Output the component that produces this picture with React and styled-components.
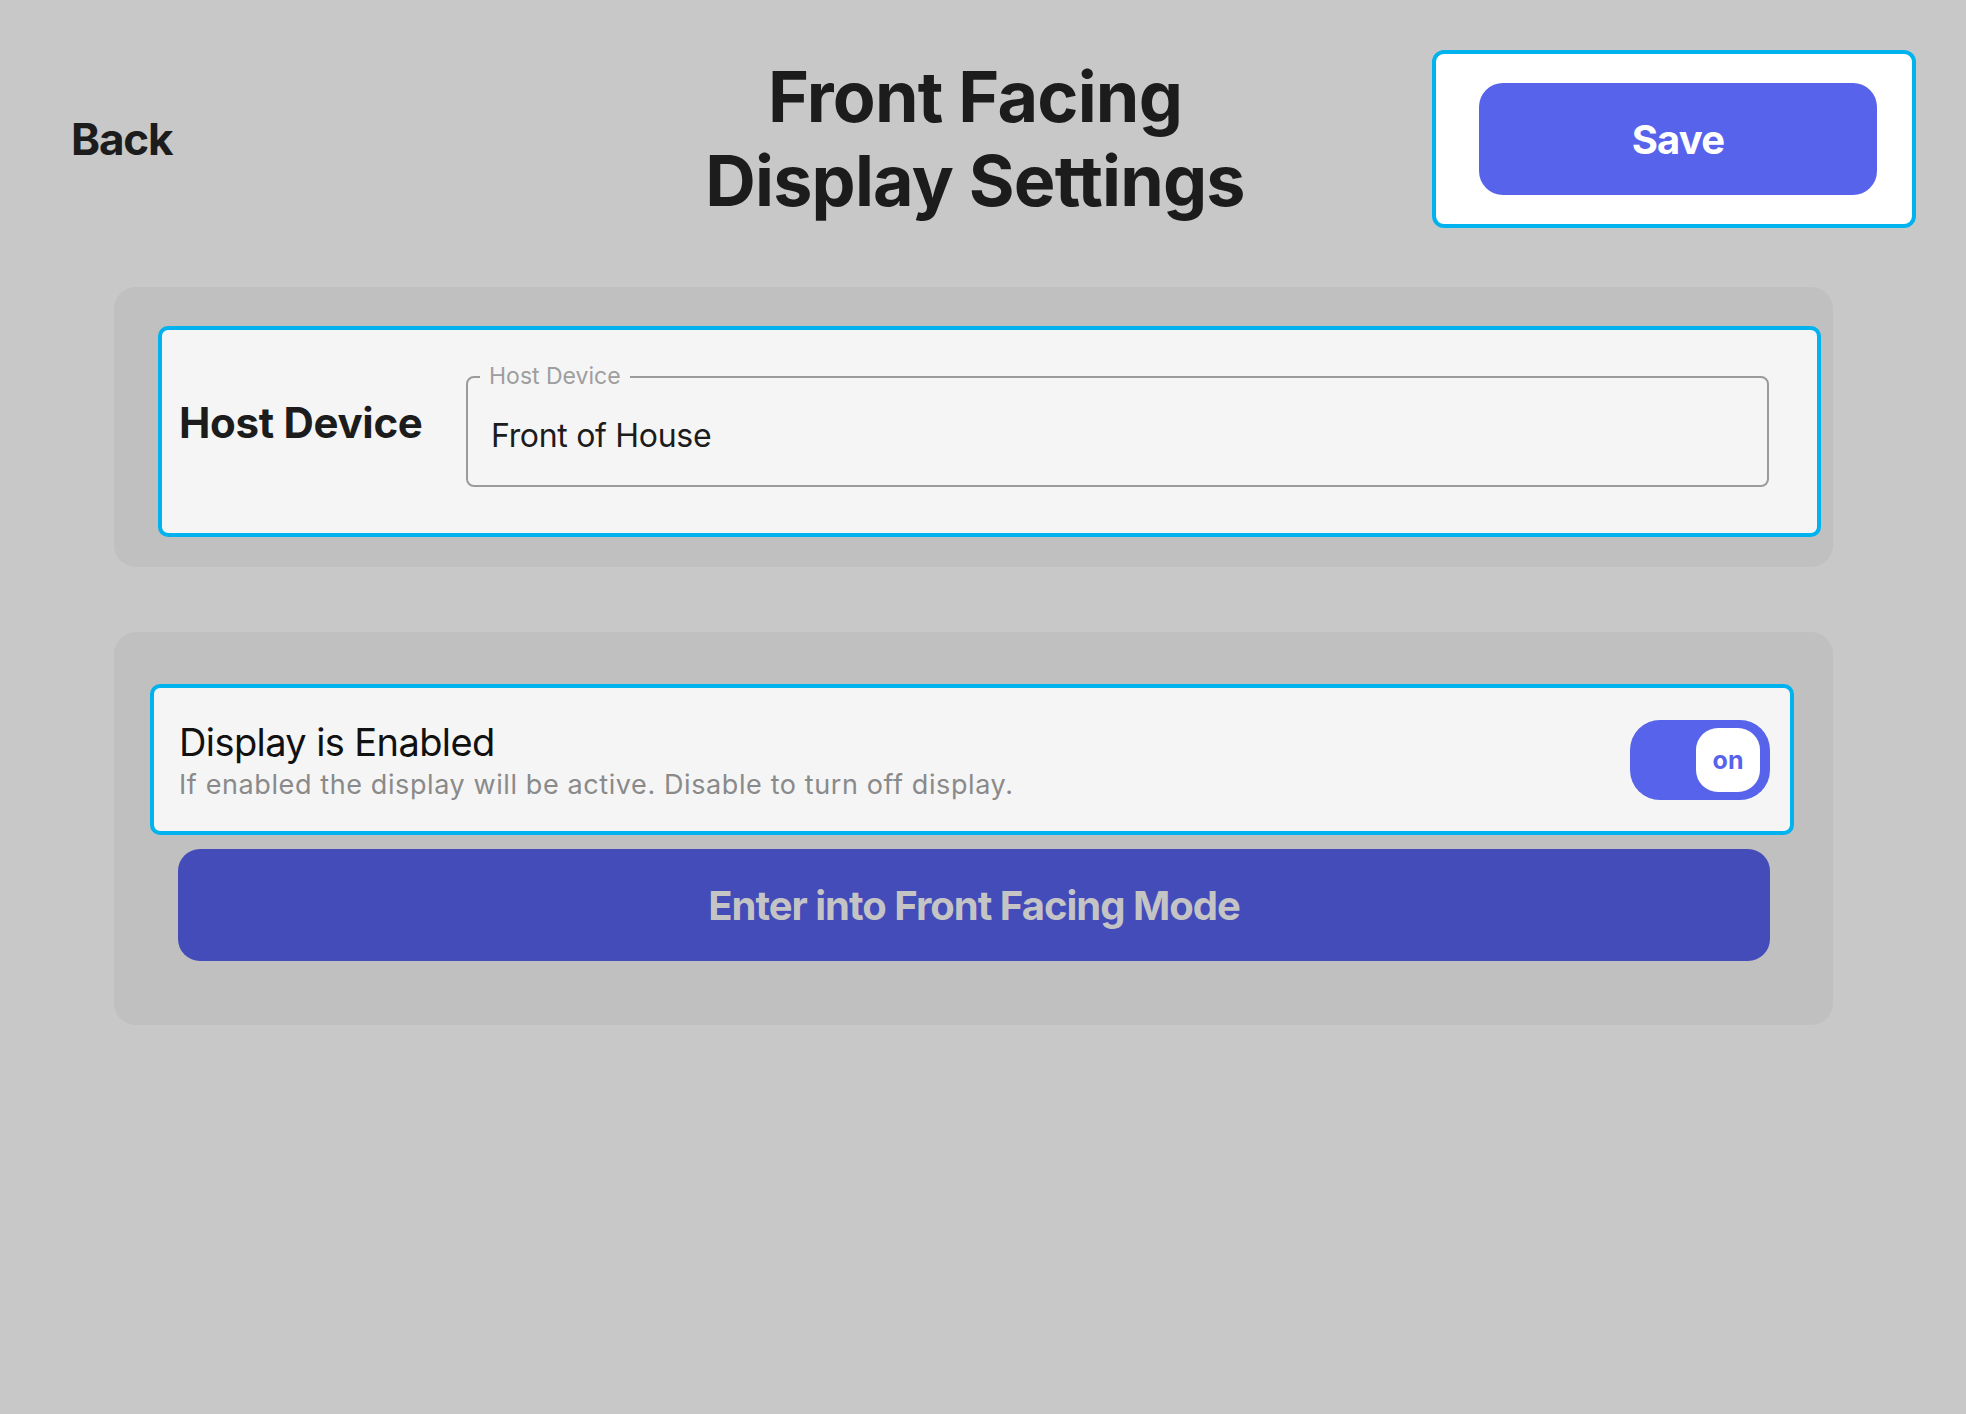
import React from "react";
import styled, { createGlobalStyle } from "styled-components";

const Global = createGlobalStyle`
  html, body {
    margin: 0;
    padding: 0;
    background: #c8c8c8;
  }
  body {
    font-family: Inter, "Noto Sans", "Liberation Sans", sans-serif;
    color: #1c1c1c;
    min-height: 1414px;
  }
  * { box-sizing: border-box; }
`;

const Page = styled.div`
  width: 1966px;
  min-height: 1414px;
  display: flex;
  flex-direction: column;
`;

const Header = styled.header`
  display: grid;
  grid-template-columns: 1fr auto 1fr;
  align-items: center;
  padding: 50px 50px 0 71px;
`;

const BackLink = styled.div`
  justify-self: start;
  font-size: 44px;
  line-height: 52px;
  font-weight: 700;
  letter-spacing: -1.2px;
  color: #1c1c1c;
`;

const Title = styled.h1`
  margin: 0 37px 0 0;
  font-size: 70px;
  line-height: 84px;
  font-weight: 700;
  letter-spacing: -0.8px;
  text-align: center;
  color: #1c1c1c;
`;

const SaveFrame = styled.div`
  justify-self: end;
  width: 484px;
  height: 178px;
  background: #ffffff;
  border: 4px solid #00b3ef;
  border-radius: 12px;
  padding: 29px 35px 0 43px;
`;

const SaveButton = styled.div`
  width: 398px;
  height: 112px;
  border-radius: 24px;
  background: #5863eb;
  color: #ffffff;
  font-size: 40px;
  font-weight: 700;
  letter-spacing: -0.8px;
  display: flex;
  align-items: center;
  justify-content: center;
`;

const Section = styled.section`
  margin: ${(p) => p.$top}px 133px 0 114px;
  background: #c0c0c0;
  border-radius: 22px;
  padding: ${(p) => p.$pad};
  display: flex;
  flex-direction: column;
`;

const FocusCard = styled.div`
  background: #f5f5f5;
  border: 4px solid #00b3ef;
  border-radius: 10px;
  display: flex;
  align-items: ${(p) => p.$align || "center"};
  padding: ${(p) => p.$pad};
  height: ${(p) => p.$h}px;
`;

const FieldLabel = styled.div`
  flex: 0 0 287px;
  margin-top: 33px;
  font-size: 42px;
  line-height: 50px;
  font-weight: 700;
  letter-spacing: -0.3px;
  color: #1c1c1c;
`;

const Outlined = styled.fieldset`
  flex: 1;
  margin: 0;
  padding: 0;
  min-width: 0;
  border: 2px solid #9b9b9b;
  border-radius: 8px;
`;

const Legend = styled.legend`
  margin-left: 12px;
  padding: 0 9px;
  font-size: 23px;
  line-height: 23px;
  color: #9e9e9e;
  letter-spacing: 0px;
`;

const InputValue = styled.div`
  padding: 28px 23px 29px;
  font-size: 32px;
  line-height: 40px;
  color: #1c1c1c;
  letter-spacing: -0.3px;
`;

const RowText = styled.div`
  flex: 1;
  display: flex;
  flex-direction: column;
  padding-top: 2px;
`;

const RowTitle = styled.div`
  font-size: 38px;
  line-height: 44px;
  font-weight: 400;
  letter-spacing: -0.6px;
  color: #111111;
`;

const RowSub = styled.div`
  margin-top: 5px;
  font-size: 27px;
  line-height: 32px;
  color: #8a8a8a;
  letter-spacing: 0.6px;
`;

const Toggle = styled.div`
  flex: 0 0 140px;
  height: 80px;
  border-radius: 30px;
  background: #5863eb;
  display: flex;
  align-items: center;
  justify-content: ${(p) => (p.$on ? "flex-end" : "flex-start")};
  padding: 0 10px;
`;

const Knob = styled.div`
  width: 64px;
  height: 64px;
  border-radius: 22px;
  background: #ffffff;
  color: #5863eb;
  font-size: 25px;
  font-weight: 700;
  display: flex;
  align-items: center;
  justify-content: center;
`;

const ModeButton = styled.div`
  margin: 14px 24px 0 28px;
  height: 112px;
  border-radius: 22px;
  background: #444cba;
  color: #c4c4c4;
  font-size: 40px;
  font-weight: 700;
  letter-spacing: -1px;
  display: flex;
  align-items: center;
  justify-content: center;
`;

export default function App() {
  return (
    <>
      <Global />
      <Page>
        <Header>
          <BackLink>Back</BackLink>
          <Title>
            Front Facing
            <br />
            Display Settings
          </Title>
          <SaveFrame>
            <SaveButton>Save</SaveButton>
          </SaveFrame>
        </Header>

        <Section $top={59} $pad="39px 12px 30px 44px">
          <FocusCard $h={211} $align="flex-start" $pad="35px 48px 0 17px">
            <FieldLabel>Host Device</FieldLabel>
            <Outlined>
              <Legend>Host Device</Legend>
              <InputValue>Front of House</InputValue>
            </Outlined>
          </FocusCard>
        </Section>

        <Section $top={65} $pad="52px 39px 64px 36px">
          <FocusCard $h={151} $pad="0 20px 0 25px">
            <RowText>
              <RowTitle>Display is Enabled</RowTitle>
              <RowSub>If enabled the display will be active. Disable to turn off display.</RowSub>
            </RowText>
            <Toggle $on>
              <Knob>on</Knob>
            </Toggle>
          </FocusCard>
          <ModeButton>Enter into Front Facing Mode</ModeButton>
        </Section>
      </Page>
    </>
  );
}
